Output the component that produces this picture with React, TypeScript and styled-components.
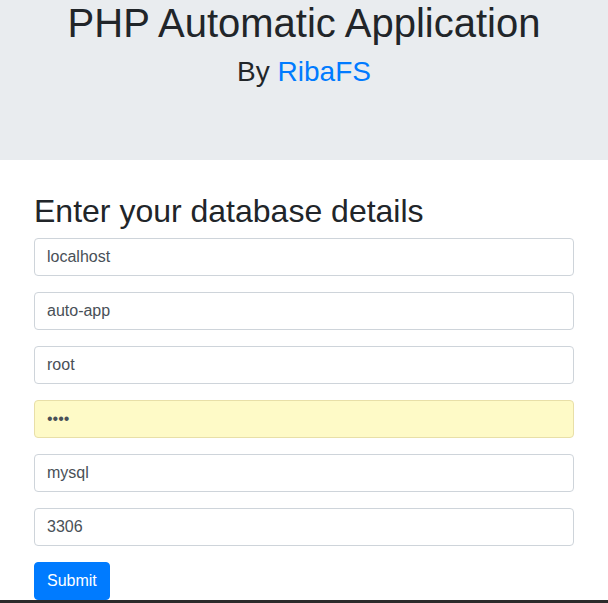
import React from "react";
import styled, { createGlobalStyle } from "styled-components";

const GlobalStyle = createGlobalStyle`
  html, body {
    margin: 0;
    padding: 0;
    background: #fff;
  }
  body {
    font-family: "Liberation Sans", Arial, sans-serif;
    color: #212529;
    overflow: hidden;
  }
  * {
    box-sizing: border-box;
  }
`;

const fields = [
  { name: "host", type: "text", value: "localhost" },
  { name: "db", type: "text", value: "auto-app" },
  { name: "user", type: "text", value: "root" },
  { name: "pass", type: "password", value: "root", autofilled: true },
  { name: "driver", type: "text", value: "mysql" },
  { name: "port", type: "text", value: "3306" },
];

const App = () => {
  return (
    <>
      <GlobalStyle />
      <Jumbotron>
        <Title>PHP Automatic Application</Title>
        <Byline>
          By <a href="#">RibaFS</a>
        </Byline>
      </Jumbotron>
      <Container>
        <Heading>Enter your database details</Heading>
        <form onSubmit={(e) => e.preventDefault()}>
          {fields.map((f) => (
            <FormGroup key={f.name}>
              <Input
                name={f.name}
                type={f.type}
                defaultValue={f.value}
                $autofilled={f.autofilled}
              />
            </FormGroup>
          ))}
          <SubmitButton type="submit">Submit</SubmitButton>
        </form>
      </Container>
      <BottomBar />
    </>
  );
};

const Jumbotron = styled.div`
  display: flow-root;
  height: 160px;
  background: #e9ecef;
  text-align: center;
  margin-bottom: 32px;
`;

const Title = styled.h1`
  margin: -1px 0 8px;
  font-size: 40px;
  font-weight: 400;
  line-height: 1.2;
`;

const Byline = styled.h3`
  margin: 0;
  font-size: 28px;
  font-weight: 400;
  line-height: 1.2;

  a {
    color: #007bff;
    text-decoration: none;
  }
`;

const Container = styled.div`
  width: 540px;
  margin: 0 auto;
`;

const Heading = styled.h2`
  margin: 0 0 8px;
  font-size: 32px;
  font-weight: 400;
  line-height: 1.2;
`;

const FormGroup = styled.div`
  margin-bottom: 16px;
`;

const Input = styled.input<{ $autofilled?: boolean }>`
  display: block;
  width: 100%;
  height: 38px;
  padding: 6px 12px;
  font-family: "Liberation Sans", Arial, sans-serif;
  font-size: 16px;
  line-height: 1.5;
  color: #495057;
  background: ${(p) => (p.$autofilled ? "#fefac7" : "#fff")};
  border: 1px solid ${(p) => (p.$autofilled ? "#e8dfa8" : "#ced4da")};
  border-radius: 4px;
  outline: none;
`;

const SubmitButton = styled.button`
  display: block;
  height: 38px;
  padding: 6px 12px;
  font-family: "Liberation Sans", Arial, sans-serif;
  font-size: 16px;
  line-height: 1.5;
  color: #fff;
  background: #007bff;
  border: 1px solid #007bff;
  border-radius: 4px;
  cursor: pointer;
`;

const BottomBar = styled.div`
  height: 3px;
  background: #2b2b2b;
`;

export default App;
